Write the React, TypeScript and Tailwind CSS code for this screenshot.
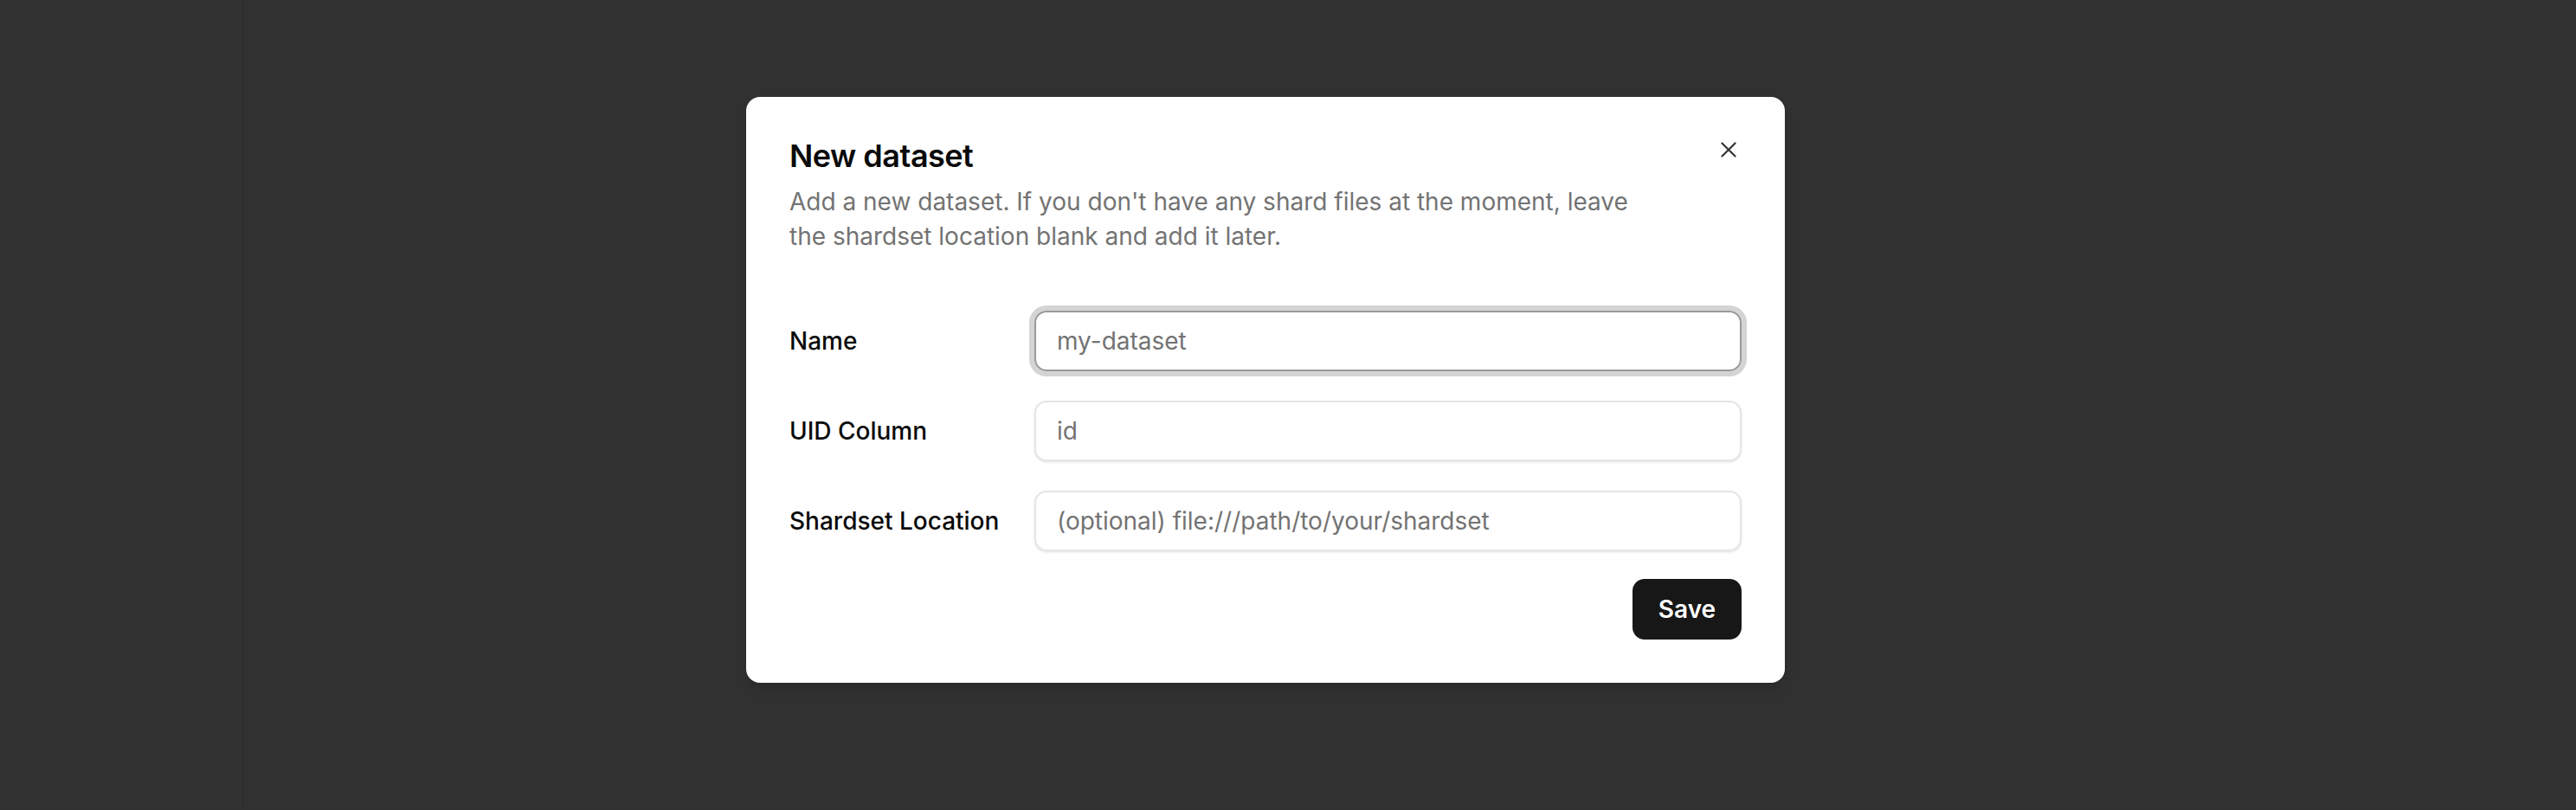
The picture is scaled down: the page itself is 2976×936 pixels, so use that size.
import React from "react";

export default function App() {
  return (
    <div className="w-[2976px] h-[936px] bg-[#313131] flex relative" style={{ fontFamily: "Inter, 'Noto Sans', sans-serif" }}>
      <div className="w-[282px] h-full border-r-2 border-[#2c2c2c]" />
      <div className="absolute left-[862px] top-[112px] w-[1200px] bg-white rounded-[16px] px-[50px] pt-[48px] pb-[50px] shadow-lg">
        <button className="absolute right-[40px] top-[36px] w-[50px] h-[50px] flex items-center justify-center text-[#333]">
          <svg width="26" height="26" viewBox="0 0 24 24" fill="none" stroke="currentColor" strokeWidth="2" strokeLinecap="round"><path d="M5 5l14 14M19 5L5 19" /></svg>
        </button>
        <h2 className="text-[36px] leading-[40px] font-semibold text-[#0a0a0a] tracking-[-0.5px]">New dataset</h2>
        <p className="mt-[13px] text-[28px] leading-[40px] text-[#737373] w-[1000px]">Add a new dataset. If you don't have any shard files at the moment, leave the shardset location blank and add it later.</p>
        <div className="mt-[66px] flex flex-col gap-[34px]">
          {[
            ["Name", "my-dataset", true],
            ["UID Column", "id", false],
            ["Shardset Location", "(optional) file:///path/to/your/shardset", false],
          ].map(([label, ph, focus]) => (
            <div key={label as string} className="flex items-center">
              <div className="w-[283px] text-[28px] font-medium text-[#0a0a0a]">{label}</div>
              <div className={`flex-1 h-[70px] rounded-[14px] border-2 flex items-center px-[24px] text-[28px] text-[#737373] ${focus ? "border-[#9a9a9a] ring-[6px] ring-[#d4d4d4]" : "border-[#e5e5e5] shadow-sm"}`}>{ph}</div>
            </div>
          ))}
        </div>
        <div className="mt-[32px] flex justify-end">
          <button className="w-[126px] h-[70px] rounded-[14px] bg-[#171717] text-white text-[28px] font-semibold">Save</button>
        </div>
      </div>
    </div>
  );
}
